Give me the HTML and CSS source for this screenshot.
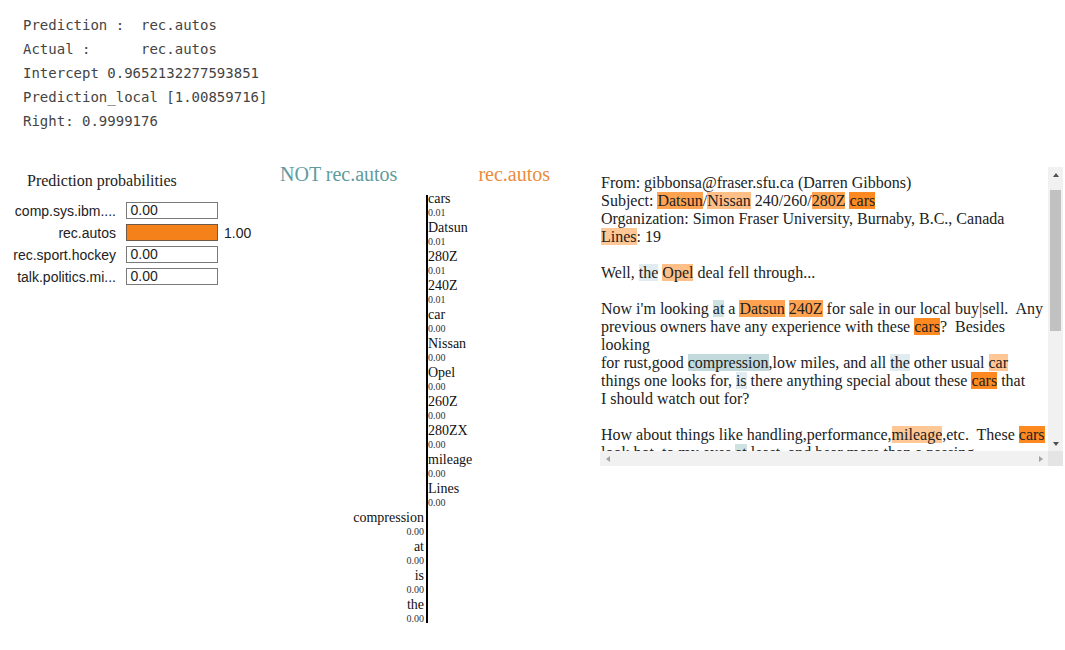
FILE: index.html
```html
<!DOCTYPE html>
<html>
<head>
<meta charset="utf-8">
<link rel="stylesheet" href="styles.css">
</head>
<body>
<pre class="out">Prediction :  rec.autos
Actual :      rec.autos
Intercept 0.9652132277593851
Prediction_local [1.00859716]
Right: 0.9999176</pre>
<div class="lime">
  <div class="probs">
    <div class="probs-title">Prediction probabilities</div>
    <div class="prow"><span class="plabel">comp.sys.ibm....</span><span class="pbox">0.00</span></div>
    <div class="prow"><span class="plabel">rec.autos</span><span class="pbox pbox-on"></span><span class="pout">1.00</span></div>
    <div class="prow"><span class="plabel">rec.sport.hockey</span><span class="pbox">0.00</span></div>
    <div class="prow"><span class="plabel">talk.politics.mi...</span><span class="pbox">0.00</span></div>
  </div>
  <div class="feats">
    <div class="feats-head"><span class="neg-title">NOT rec.autos</span><span class="pos-title">rec.autos</span></div>
    <div class="fgrid">
      <div class="axis"></div>
      <div class="fr"><div class="fw">cars</div><div class="fv">0.01</div></div>
      <div class="fr"><div class="fw">Datsun</div><div class="fv">0.01</div></div>
      <div class="fr"><div class="fw">280Z</div><div class="fv">0.01</div></div>
      <div class="fr"><div class="fw">240Z</div><div class="fv">0.01</div></div>
      <div class="fr"><div class="fw">car</div><div class="fv">0.00</div></div>
      <div class="fr"><div class="fw">Nissan</div><div class="fv">0.00</div></div>
      <div class="fr"><div class="fw">Opel</div><div class="fv">0.00</div></div>
      <div class="fr"><div class="fw">260Z</div><div class="fv">0.00</div></div>
      <div class="fr"><div class="fw">280ZX</div><div class="fv">0.00</div></div>
      <div class="fr"><div class="fw">mileage</div><div class="fv">0.00</div></div>
      <div class="fr"><div class="fw">Lines</div><div class="fv">0.00</div></div>
      <div class="fl"><div class="fw">compression</div><div class="fv">0.00</div></div>
      <div class="fl"><div class="fw">at</div><div class="fv">0.00</div></div>
      <div class="fl"><div class="fw">is</div><div class="fv">0.00</div></div>
      <div class="fl"><div class="fw">the</div><div class="fv">0.00</div></div>
    </div>
  </div>
  <div class="textbox">
    <div class="textview"><div class="text">From: gibbonsa@fraser.sfu.ca (Darren Gibbons)
Subject: <span class="hp7">Datsun</span>/<span class="hp5">Nissan</span> 240/260/<span class="hp7">280Z</span> <span class="hp9">cars</span>
Organization: Simon Fraser University, Burnaby, B.C., Canada
<span class="hp4">Lines</span>: 19

Well, <span class="hn2">the</span> <span class="hp5">Opel</span> deal fell through...

Now i'm looking <span class="hn3">at</span> a <span class="hp7">Datsun</span> <span class="hp7">240Z</span> for sale in our local buy|sell.  Any
previous owners have any experience with these <span class="hp9">cars</span>?  Besides looking
for rust,good <span class="hn4">compression</span>,low miles, and all <span class="hn2">the</span> other usual <span class="hp4">car</span>
things one looks for, <span class="hn2">is</span> there anything special about these <span class="hp9">cars</span> that
I should watch out for?

How about things like handling,performance,<span class="hp4">mileage</span>,etc.  These <span class="hp9">cars</span>
look hot, to my eyes <span class="hn3">at</span> least, and bear more than a passing
resemblance to <span class="hn2">the</span> Porsche 911, <span class="hn3">at</span> least from the rear...

Also, what are the differences between <span class="hn2">the</span> <span class="hp7">240Z</span>, <span class="hn2">the</span> <span class="hp5">260Z</span> and <span class="hn2">the</span>
<span class="hp5">280ZX</span>?  Which <span class="hn2">is</span> <span class="hn2">the</span> best year to look for?

Any help would be greatly appreciated!

Thanks,
Darren Gibbons
gibbonsa@fraser.sfu.ca</div></div>
    <div class="vscroll">
      <div class="sbtn"><span class="tri tri-up"></span></div>
      <div class="vtrack"><div class="vthumb"></div></div>
      <div class="sbtn"><span class="tri tri-down"></span></div>
    </div>
    <div class="hscroll">
      <div class="sbtn"><span class="tri tri-left"></span></div>
      <div class="htrack"></div>
      <div class="sbtn"><span class="tri tri-right"></span></div>
    </div>
    <div class="corner"></div>
  </div>
</div>
</body>
</html>
```

FILE: styles.css
```css
html, body {
  margin: 0;
  background: #fff;
}

body {
  font-family: "Liberation Serif", "Times New Roman", serif;
  color: #222;
}

.out {
  margin: 0;
  padding: 13px 0 0 23px;
  font: 14px/24px "DejaVu Sans Mono", "Liberation Mono", monospace;
  color: #444;
}

.lime {
  display: flex;
  align-items: flex-start;
  margin-top: 29px;
}

/* prediction probabilities */
.probs {
  flex: none;
  width: 270px;
  padding-top: 10px;
}

.probs-title {
  font-size: 16px;
  line-height: 18px;
  padding-left: 27px;
  margin-bottom: 9.5px;
  color: #222;
}

.prow {
  display: flex;
  align-items: center;
  height: 22px;
  font: 14px/16px "Liberation Sans", Arial, sans-serif;
  color: #222;
}

.plabel {
  width: 116px;
  text-align: right;
}

.pbox {
  box-sizing: border-box;
  width: 92px;
  height: 17px;
  margin-left: 10px;
  border: 1.5px solid #7a7a7a;
  padding-left: 3.5px;
  line-height: 14px;
}

.pbox-on {
  background: #f5811a;
  border-color: #6e5a48;
}

.pout {
  margin-left: 6px;
}

/* feature weights */
.feats {
  flex: none;
  width: 330px;
}

.feats-head {
  display: flex;
  font-size: 20px;
  line-height: 24px;
  padding-left: 10px;
  margin-bottom: 4.5px;
}

.neg-title {
  color: #5f9b9e;
}

.pos-title {
  color: #ea8c3e;
  margin-left: 81px;
}

.fgrid {
  display: grid;
  grid-template-columns: 156px 2px auto;
  grid-auto-rows: 29px;
}

.axis {
  grid-column: 2;
  grid-row: 1 / span 15;
  background: #000;
  margin: 4.5px 0 3px;
}

.fl {
  grid-column: 1;
  text-align: right;
  padding-right: 2px;
}

.fr {
  grid-column: 3;
}

.fw {
  font-size: 14px;
  line-height: 15px;
  color: #111;
}

.fv {
  font-size: 10px;
  line-height: 14px;
  color: #333;
}

/* text panel with drawn scrollbars */
.textbox {
  flex: none;
  display: grid;
  grid-template-columns: 448px 15px;
  grid-template-rows: 284px 15px;
  margin-top: 5px;
}

.textview {
  overflow: hidden;
}

.text {
  white-space: pre-wrap;
  font-size: 16px;
  line-height: 18px;
  padding: 7px 0 0 1px;
  color: #222;
}

.vscroll {
  display: flex;
  flex-direction: column;
  background: #f1f1f1;
}

.hscroll {
  display: flex;
  background: #f1f1f1;
}

.corner {
  background: #e4e4e4;
}

.sbtn {
  flex: none;
  width: 15px;
  height: 15px;
  display: flex;
  align-items: center;
  justify-content: center;
}

.vtrack {
  flex: 1;
  padding-top: 8px;
}

.vthumb {
  width: 11px;
  height: 141px;
  margin-left: 2px;
  background: #c1c1c1;
}

.htrack {
  flex: 1;
}

.tri {
  width: 0;
  height: 0;
  border: 0 solid transparent;
}

.tri-up {
  border-width: 0 3.5px 4px;
  border-bottom-color: #505050;
}

.tri-down {
  border-width: 4px 3.5px 0;
  border-top-color: #505050;
}

.tri-left {
  border-width: 3.5px 4px 3.5px 0;
  border-right-color: #a3a3a3;
}

.tri-right {
  border-width: 3.5px 0 3.5px 4px;
  border-left-color: #a3a3a3;
}

.hp9 { background: rgba(255, 127, 14, 0.92); }
.hp7 { background: rgba(255, 127, 14, 0.72); }
.hp5 { background: rgba(255, 127, 14, 0.5); }
.hp4 { background: rgba(255, 127, 14, 0.44); }
.hn4 { background: rgba(95, 158, 160, 0.38); }
.hn3 { background: rgba(95, 158, 160, 0.3); }
.hn2 { background: rgba(120, 170, 190, 0.22); }
```
